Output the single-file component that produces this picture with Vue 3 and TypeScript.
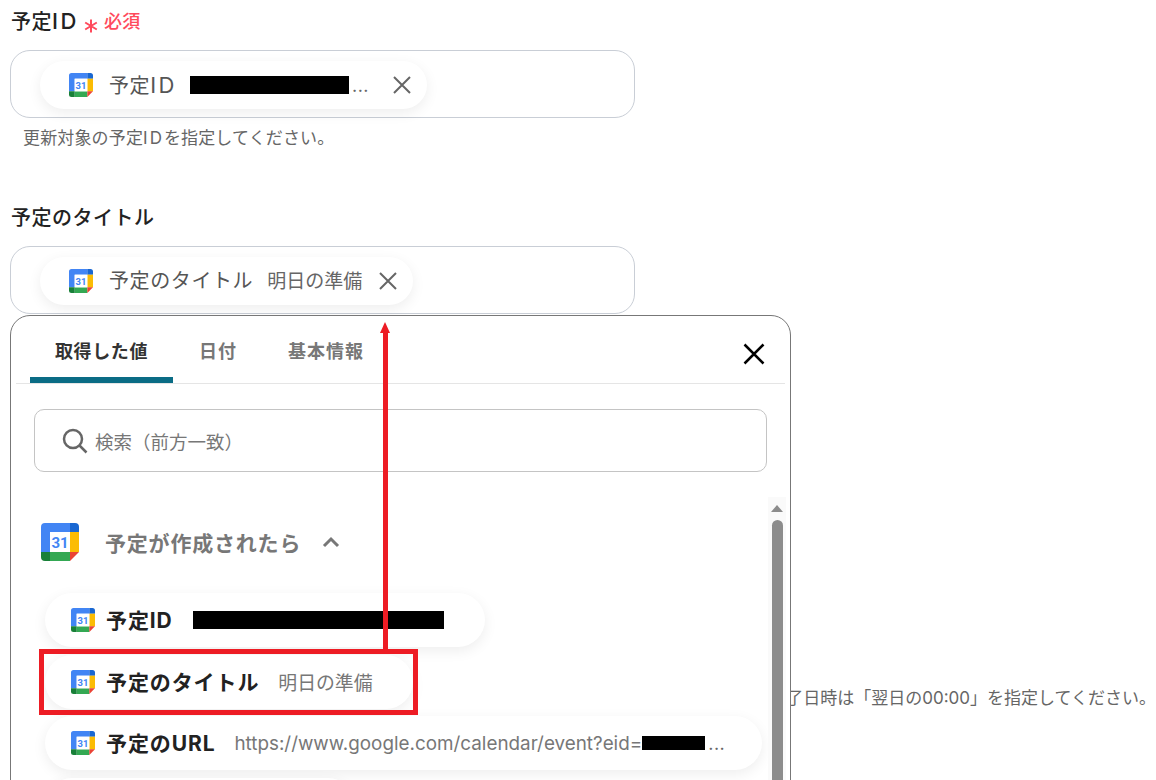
<script setup lang="ts">
import { h } from 'vue'

interface Row { name: string; value?: string; mask?: number; dots?: boolean; width: number }
const rows: Row[] = [
  { name: '予定ID', mask: 251, width: 440 },
  { name: '予定のタイトル', value: '明日の準備', width: 368 },
  { name: '予定のURL', value: 'https://www.google.com/calendar/event?eid=', mask: 63, dots: true, width: 717 },
  { name: '', width: 310 },
]
const tabs = ['取得した値', '日付', '基本情報']

const GCal = () =>
  h('svg', { viewBox: '0 0 38 38', class: 'gcal' }, [
    h('path', { d: 'M4 0H29V9H9V29H0V4Q0 0 4 0Z', fill: '#4285f4' }),
    h('path', { d: 'M29 0H34Q38 0 38 4V9H29Z', fill: '#1967d2' }),
    h('rect', { x: 29, y: 9, width: 9, height: 20, fill: '#fbbc04' }),
    h('rect', { x: 9, y: 29, width: 20, height: 9, fill: '#34a853' }),
    h('path', { d: 'M0 29H9V38H4Q0 38 0 34Z', fill: '#188038' }),
    h('path', { d: 'M29 29H38L29 38Z', fill: '#ea4335' }),
    h('rect', { x: 9, y: 9, width: 20, height: 20, fill: '#fff' }),
    h('text', { x: 19, y: 25, 'text-anchor': 'middle', class: 'cal-num' }, '31'),
  ])
</script>

<template>
  <div class="page">
    <section class="field first">
      <div class="label"><span>予定<span class="lat">ID</span></span>
        <svg class="star" viewBox="0 0 14 14"><path d="M7 0.500V13.500M1.200 3.500L12.800 10.500M12.800 3.500L1.200 10.500" /></svg>
        <span class="req">必須</span>
      </div>
      <div class="box">
        <div class="chip c1">
          <GCal class="ico" />
          <span class="chip-name">予定<span class="lat">ID</span></span>
          <span class="mask m1"></span><span class="dots">...</span>
          <svg class="x" viewBox="0 0 20 20"><path d="M2 2L18 18M18 2L2 18" /></svg>
        </div>
      </div>
      <p class="help">更新対象の予定<span class="id">ID</span>を指定してください。</p>
    </section>

    <section class="field second">
      <div class="label">予定のタイトル</div>
      <div class="box">
        <div class="chip c2">
          <GCal class="ico" />
          <span class="chip-name">予定のタイトル</span>
          <span class="chip-val">明日の準備</span>
          <svg class="x" viewBox="0 0 20 20"><path d="M2 2L18 18M18 2L2 18" /></svg>
        </div>
      </div>
    </section>

    <p class="help far">終日予定の場合、終了日時は「翌日の00:00」を指定してください。</p>

    <div class="popup">
      <div class="tabs">
        <div v-for="(t, i) in tabs" :key="t" class="tab" :class="{ active: i === 0 }">{{ t }}</div>
        <svg class="close" viewBox="0 0 24 24"><path d="M2.500 2.500L21.500 21.500M21.500 2.500L2.500 21.500" /></svg>
      </div>
      <div class="search">
        <svg class="lens" viewBox="0 0 26 26"><circle cx="11" cy="11" r="9" /><path d="M17.500 17.500L24.500 24.500" /></svg>
        <span>検索（前方一致）</span>
      </div>
      <div class="list">
        <div class="scroll">
          <i class="up"></i>
          <i class="thumb"></i>
        </div>
        <div class="group">
          <GCal class="big" />
          <span class="group-name">予定が作成されたら</span>
          <svg class="chev" viewBox="0 0 18 12"><path d="M2 10L9 3L16 10" /></svg>
        </div>
        <div v-for="(r, i) in rows" :key="i" class="row" :style="{ width: r.width + 'px' }">
          <template v-if="r.name">
            <GCal class="ico" />
            <span class="row-name">{{ r.name }}</span>
            <span v-if="r.value" class="row-val">{{ r.value }}</span>
            <span v-if="r.mask" class="mask" :style="{ width: r.mask + 'px' }"></span>
            <span v-if="r.dots" class="dots">...</span>
          </template>
        </div>
      </div>
    </div>

    <div class="mark-box"></div>
    <div class="mark-line"></div>
    <div class="mark-head"></div>
  </div>
</template>

<style>
.gcal .cal-num { font: 700 15px "Roboto", sans-serif; fill: #4285f4; }
</style>

<style scoped>
.page {
  position: relative;
  width: 1156px;
  height: 780px;
  overflow: hidden;
  background: #fff;
  padding-left: 10px;
  box-sizing: border-box;
  font-family: "Inter", "Noto Sans CJK JP", sans-serif;
  color: #222;
}
.field { width: 625px; }
.first { padding-top: 7px; }
.second { margin-top: 54px; }
.second .box { margin-top: 13px; }
.lat { font-size: 22px; letter-spacing: 2.500px; }
.id { letter-spacing: 2px; }
.label {
  display: flex;
  align-items: center;
  height: 29px;
  padding-left: 1px;
  font-size: 20px;
  font-weight: 500;
  line-height: 29px;
  letter-spacing: 0.5px;
  color: #222;
}
.star { width: 14px; height: 14px; margin: 9px 0 0 5px; flex: none; }
.star path { fill: none; stroke: #ff4a5c; stroke-width: 2; }
.req { margin-left: 6px; font-size: 18px; font-weight: 500; color: #ff4a5c; letter-spacing: 0.5px; }
.box {
  box-sizing: border-box;
  height: 68px;
  margin-top: 14px;
  padding: 10px 0 0 29px;
  border: 1px solid #c9ced6;
  border-radius: 20px;
}
.chip {
  display: flex;
  align-items: center;
  height: 48px;
  box-sizing: border-box;
  padding-left: 29px;
  border-radius: 24px;
  background: #fff;
  box-shadow: 0 4px 14px rgba(0, 0, 0, 0.07);
}
.c1 { width: 387px; }
.c2 { width: 373px; }
.ico { width: 24px; height: 24px; flex: none; }
.chip-name { margin-left: 16px; font-size: 20px; line-height: 46px; height: 46px; color: #555; letter-spacing: 0.6px; }
.chip-val { margin: 0 0 3px 14px; font-size: 19px; color: #666; letter-spacing: 0; white-space: nowrap; }
.mask { display: inline-block; height: 18px; background: #000; flex: none; }
.m1 { width: 159px; margin-left: 13px; }
.dots { margin-left: 3px; font-size: 18px; color: #666; letter-spacing: 0.5px; }
.x { width: 20px; height: 20px; margin-left: auto; margin-right: 15px; flex: none; }
.x path { fill: none; stroke: #666; stroke-width: 2; }
.help { margin: 8px 0 0 13px; font-size: 17px; line-height: 24px; color: #666; letter-spacing: 0.15px; }
.far { margin: 372px 0 0; text-align: right; white-space: nowrap; letter-spacing: 0; }

.popup {
  position: absolute;
  left: 10px;
  top: 315px;
  z-index: 2;
  box-sizing: border-box;
  width: 781px;
  height: 520px;
  padding: 0 5px;
  background: #fff;
  border: 1px solid #777;
  border-radius: 20px;
}
.tabs {
  position: relative;
  display: flex;
  height: 67px;
  padding-left: 14px;
  border-bottom: 1px solid #e5e5e5;
}
.tab {
  box-sizing: border-box;
  height: 67px;
  padding: 20px 25px 0 26px;
  font-size: 18px;
  font-weight: 700;
  line-height: 32px;
  letter-spacing: 1px;
  color: #777;
  white-space: nowrap;
}
.tab.active { width: 143px; padding: 20px 0 0 25px; letter-spacing: 0.6px; color: #333; border-bottom: 6px solid #0a6c85; border-radius: 6px 6px 0 0; }
.close { position: absolute; right: 19px; top: 26px; width: 24px; height: 24px; }
.close path { fill: none; stroke: #000; stroke-width: 2.500; }
.search {
  display: flex;
  align-items: center;
  box-sizing: border-box;
  width: 733px;
  height: 63px;
  margin: 25px 0 0 18px;
  padding-left: 27px;
  border: 1px solid #c4c4c4;
  border-radius: 10px;
  font-size: 18.500px;
  color: #777;
}
.lens { width: 26px; height: 26px; margin-right: 7px; flex: none; }
.lens circle, .lens path { fill: none; stroke: #666; stroke-width: 2.500; }
.list { position: relative; padding-top: 51px; }
.scroll {
  position: absolute;
  right: -1px;
  top: 25px;
  width: 18px;
  height: 300px;
  background: #fafafa;
}
.up {
  position: absolute;
  left: 3px;
  top: 8px;
  border: 6.500px solid transparent;
  border-top: 0;
  border-bottom: 7px solid #8c8c8c;
}
.thumb {
  position: absolute;
  left: 4px;
  top: 23px;
  width: 11px;
  height: 280px;
  border-radius: 6px 6px 0 0;
  background: #8c8c8c;
}
.group { display: flex; align-items: center; height: 38px; padding-left: 25px; }
.big { width: 38px; height: 38px; flex: none; }
.group-name { margin-left: 26px; font-size: 21px; font-weight: 700; color: #777; letter-spacing: 0.8px; }
.chev { width: 18px; height: 12px; margin-left: 21px; }
.chev path { fill: none; stroke: #777; stroke-width: 3; }
.row {
  display: flex;
  align-items: center;
  box-sizing: border-box;
  height: 54px;
  margin: 0 0 7.500px 29px;
  padding-left: 26px;
  border-radius: 27px;
  background: #fff;
  box-shadow: 0 4px 14px rgba(0, 0, 0, 0.07);
}
.group + .row { margin-top: 32px; }
.row-name { margin-left: 11px; padding-bottom: 2px; font-size: 21px; font-weight: 700; color: #222; letter-spacing: 0.9px; white-space: nowrap; }
.row-val { margin-left: 19px; font-size: 18.850px; color: #777; white-space: nowrap; }
.row .mask { height: 18px; margin-left: 20px; }
.row .row-val + .mask { margin-left: 0; height: 14px; }

.mark-box {
  position: absolute;
  z-index: 3;
  left: 39px;
  top: 649px;
  width: 379px;
  height: 66px;
  box-sizing: border-box;
  border: 5px solid #ed1c24;
}
.mark-line {
  position: absolute;
  z-index: 3;
  left: 383px;
  top: 332px;
  width: 5px;
  height: 318px;
  background: #ed1c24;
}
.mark-head {
  position: absolute;
  z-index: 3;
  left: 380px;
  top: 322px;
  border: 5.500px solid transparent;
  border-top: 0;
  border-bottom: 11px solid #ed1c24;
}
</style>
